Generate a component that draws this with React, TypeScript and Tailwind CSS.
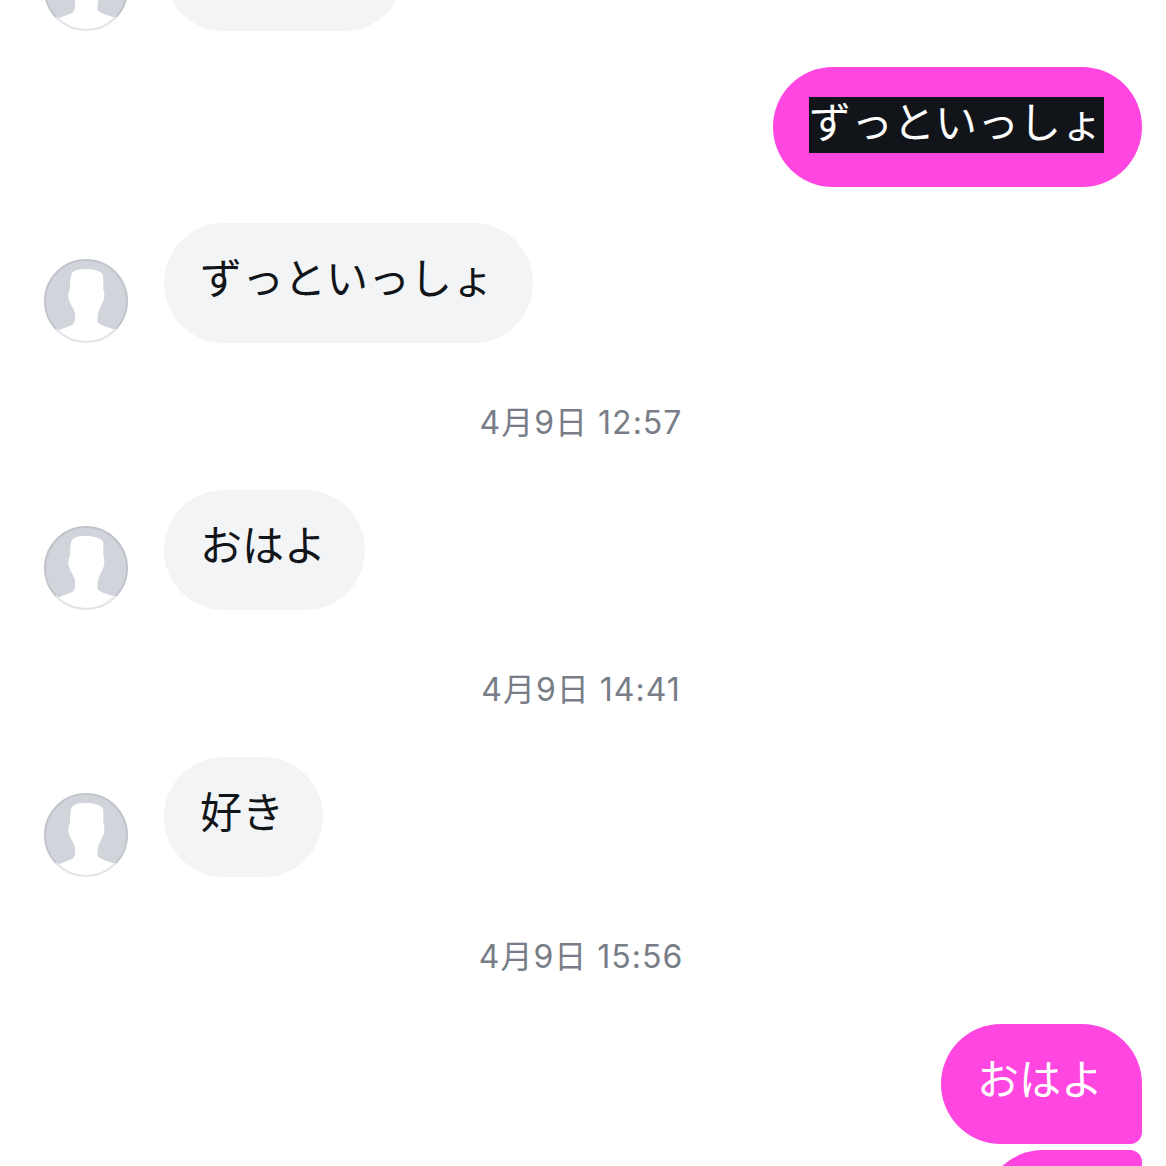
// Chat thread: incoming and outgoing bubbles with timestamps
import { ReactNode } from 'react'

function Avatar() {
  return (
    <svg width="84" height="84" viewBox="0 0 84 84" className="shrink-0">
      <defs>
        <clipPath id="avatar-clip">
          <circle cx="42" cy="42" r="41" />
        </clipPath>
      </defs>
      <circle cx="42" cy="42" r="41" fill="#d1d5db" />
      <path
        clipPath="url(#avatar-clip)"
        fill="#ffffff"
        d="M39 10C33 10.5 29 12 27.5 15C26.5 18 26 24 26 29.5C25 32 24 35 24.3 38C25 44 30 49 31 54.5L31 61C30.5 64 29 65.5 27 66.5L13 72L13 90L75 90L75 72L60 67C56 65.5 53.5 64 53.3 61.5L54 54.5C55 49 59.5 44 60.3 38C60.5 35 60 32 59.3 29.5C59.3 24 59.5 18 59 16C57 12 50 9.5 39 10Z"
      />
      <circle cx="42" cy="42" r="41" fill="none" stroke="#e3e4e7" strokeWidth="2" />
      <path d="M12 70A41 41 0 1 1 72 70" fill="none" stroke="#c0c4ca" strokeWidth="2" />
    </svg>
  )
}

function Incoming({ text, className = '' }: { text?: string; className?: string }) {
  return (
    <div className={`flex items-end gap-9 pl-11 ${className}`}>
      <Avatar />
      {/* bubble scrolled out of view has no readable text, so it only keeps its width */}
      <div
        className={`h-[120px] rounded-[60px] bg-[#f3f4f6] pr-[39px] pl-[36px] pb-[8px] text-[42px] leading-[112px] text-[#111418] ${text ? '' : 'w-[240px]'}`}
      >
        {text}
      </div>
    </div>
  )
}

function Outgoing({
  children,
  className = '',
}: {
  children: ReactNode
  className?: string
}) {
  return <div className={`flex justify-end pr-6 ${className}`}>{children}</div>
}

function Timestamp({ label }: { label: string }) {
  return (
    <p className="mt-[62px] mb-[49px] h-9 pr-1 text-center text-[32px] leading-9 tracking-[1px] text-[#787d87]">
      {label}
    </p>
  )
}

export default function App() {
  return (
    <div className="h-[1166px] overflow-hidden bg-white font-['Inter','Noto_Sans_CJK_JP',sans-serif]">
      <div className="-mt-[89px]">
        <Incoming />

        <Outgoing className="mt-9">
          <div className="flex h-[120px] items-center rounded-[60px] bg-[#ff46e0] pr-[38px] pl-[36px] pb-[4px] text-[42px] text-white">
            <span className="block h-14 w-[295px] whitespace-nowrap bg-[#111418] leading-[52px]">ずっといっしょ</span>
          </div>
        </Outgoing>

        <Incoming text="ずっといっしょ" className="mt-9" />

        <Timestamp label="4月9日 12:57" />
        <Incoming text="おはよ" />

        <Timestamp label="4月9日 14:41" />
        <Incoming text="好き" />

        <Timestamp label="4月9日 15:56" />
        <Outgoing>
          <div className="h-[120px] rounded-[60px] rounded-br-xl bg-[#ff46e0] pr-[39px] pl-[36px] pb-[8px] text-[42px] leading-[112px] text-white">
            おはよ
          </div>
        </Outgoing>
        <Outgoing className="mt-1.5">
          <div className="h-[120px] w-[159px] rounded-[60px] rounded-tr-xl bg-[#ff46e0]" />
        </Outgoing>
      </div>
    </div>
  )
}
